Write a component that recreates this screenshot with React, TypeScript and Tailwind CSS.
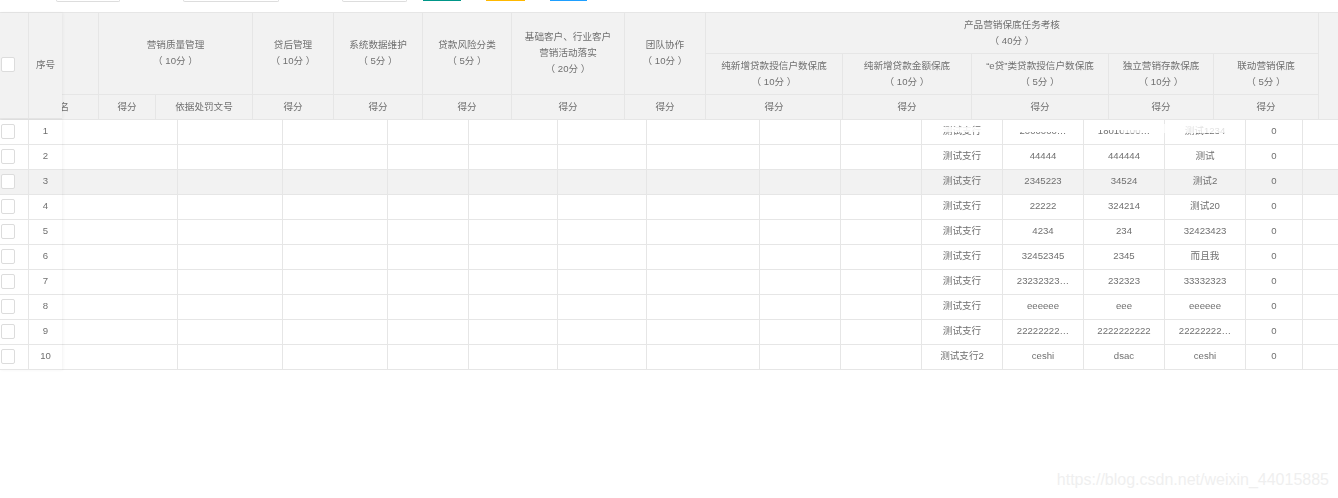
const columnsTemplate =
  "grid-cols-[37px_57px_97px_81px_89px_89px_113px_81px_137px_129px_137px_105px_105px_20px]";

function H({ className = "", lines }: { className?: string; lines: string[] }) {
  return (
    <div className={`flex flex-col items-center justify-center overflow-hidden border-r border-b border-[#e6e6e6] text-center leading-[16px] ${className}`}>
      {lines.map((l) => (
        <span key={l} className="blur-[0.25px]">{l}</span>
      ))}
    </div>
  );
}

const rows = [
  ["测试支行", "2000000…", "18010100…", "测试1234", "0"],
  ["测试支行", "44444", "444444", "测试", "0"],
  ["测试支行", "2345223", "34524", "测试2", "0"],
  ["测试支行", "22222", "324214", "测试20", "0"],
  ["测试支行", "4234", "234", "32423423", "0"],
  ["测试支行", "32452345", "2345", "而且我", "0"],
  ["测试支行", "23232323…", "232323", "33332323", "0"],
  ["测试支行", "eeeeee", "eee", "eeeeee", "0"],
  ["测试支行", "22222222…", "2222222222", "22222222…", "0"],
  ["测试支行2", "ceshi", "dsac", "ceshi", "0"],
];

const emptyWidths = ["w-[116px]", "w-[105px]", "w-[105px]", "w-[81px]", "w-[89px]", "w-[89px]", "w-[113px]", "w-[81px]", "w-[81px]"];
const dataWidths = ["w-[81px]", "w-[81px]", "w-[81px]", "w-[81px]", "w-[57px]"];

function Box() {
  return <span className="block h-[15px] w-[14px] rounded-[2px] border border-[#dcdcdc] bg-white" />;
}

export default function App() {
  return (
    <div
      className="h-[498px] w-[1338px] overflow-hidden bg-white text-[9.6px] text-[#707070]"
      style={{ fontFamily: '"Liberation Sans", "Noto Sans CJK SC", sans-serif' }}
    >
      {/* toolbar, cut off at the top of the window */}
      <div className="flex h-[12px] items-start pl-[56px]">
        <div className="h-[2px] w-[64px] rounded-b-[2px] border-x border-b border-[#dddddd]" />
        <div className="ml-[63px] h-[2px] w-[96px] rounded-b-[2px] border-x border-b border-[#dddddd]" />
        <div className="ml-[63px] h-[2px] w-[65px] rounded-b-[2px] border-x border-b border-[#dddddd]" />
        <div className="ml-[16px] h-[1px] w-[38px] bg-[#009688]" />
        <div className="ml-[25px] h-[1px] w-[39px] bg-[#ffb800]" />
        <div className="ml-[25px] h-[1px] w-[37px] bg-[#1e9fff]" />
      </div>

      {/* header */}
      <div className="flex h-[108px] border-y border-[#e6e6e6] bg-[#f2f2f2]">
        <div className="z-10 flex w-[62px] shrink-0 bg-[#f2f2f2] shadow-[1px_0_3px_rgba(0,0,0,0.05)]">
          <div className="flex w-[29px] shrink-0 items-center border-r border-b border-[#e6e6e6] pb-[2px] pl-[1px]">
            <Box />
          </div>
          <div className="flex w-[33px] shrink-0 items-center justify-center border-b border-[#e6e6e6]">
            <span className="blur-[0.25px]">序号</span>
          </div>
        </div>
        <div className={`grid flex-1 grid-rows-[41px_41px_25px] ${columnsTemplate}`}>
          <H className="row-span-2" lines={[""]} />
          <H className="col-span-2 row-span-2 pb-[2px]" lines={["营销质量管理", "（ 10分 ）"]} />
          <H className="row-span-2 pb-[2px]" lines={["贷后管理", "（ 10分 ）"]} />
          <H className="row-span-2 pb-[2px]" lines={["系统数据维护", "（ 5分 ）"]} />
          <H className="row-span-2 pb-[2px]" lines={["贷款风险分类", "（ 5分 ）"]} />
          <H className="row-span-2 pb-[2px]" lines={["基础客户、行业客户", "营销活动落实", "（ 20分 ）"]} />
          <H className="row-span-2 pb-[2px]" lines={["团队协作", "（ 10分 ）"]} />
          <H className="col-span-5" lines={["产品营销保底任务考核", "（ 40分 ）"]} />
          <div className="row-span-3 border-b border-[#e6e6e6]" />
          <H lines={["纯新增贷款授信户数保底", "（ 10分 ）"]} />
          <H lines={["纯新增贷款金额保底", "（ 10分 ）"]} />
          <H lines={["“e贷”类贷款授信户数保底", "（ 5分 ）"]} />
          <H lines={["独立营销存款保底", "（ 10分 ）"]} />
          <H lines={["联动营销保底", "（ 5分 ）"]} />
          <H className="items-end pr-[29px]" lines={["名"]} />
          {["得分", "依据处罚文号", "得分", "得分", "得分", "得分", "得分", "得分", "得分", "得分", "得分", "得分"].map((t, i) => (
            <H key={i} lines={[t]} />
          ))}
        </div>
      </div>

      {/* body */}
      <div className="flex">
        <div className="z-10 w-[62px] shrink-0 bg-white shadow-[1px_0_3px_rgba(0,0,0,0.05)]">
          {rows.map((_, i) => (
            <div key={i} className={`flex h-[25px] border-b border-[#e6e6e6] ${i === 2 ? "bg-[#f2f2f2]" : ""}`}>
              <div className="flex w-[29px] shrink-0 items-center border-r border-[#e6e6e6] pb-[2px] pl-[1px]">
                <Box />
              </div>
              <div className="flex flex-1 items-center justify-center pb-[2px]">
                <span className="blur-[0.25px]">{i + 1}</span>
              </div>
            </div>
          ))}
        </div>
        <div className="flex-1">
          {rows.map((r, i) => (
            <div key={i} className={`relative flex h-[25px] border-b border-[#e6e6e6] ${i === 2 ? "bg-[#f2f2f2]" : ""}`}>
              {emptyWidths.map((w, j) => (
                <div key={j} className={`shrink-0 border-r border-[#e6e6e6] ${w}`} />
              ))}
              {r.map((c, j) => (
                <div key={j} className={`flex shrink-0 items-center justify-center border-r border-[#e6e6e6] pb-[1px] ${dataWidths[j]}`}>
                  <span className="blur-[0.25px]">{c}</span>
                </div>
              ))}
              {i === 0 && (
                <>
                  {/* erased patches of the screenshot over the first row */}
                  <div className="absolute top-[7px] left-[870px] h-[5px] w-[70px] bg-white/90" />
                  <div className="absolute top-0 left-[950px] h-[12px] w-[70px] bg-white" />
                  <div className="absolute top-0 left-[1025px] h-[10px] w-[77px] bg-white" />
                  <div className="absolute top-[4px] left-[1060px] h-[9px] w-[50px] bg-white/70" />
                  <div className="absolute top-0 left-[1110px] h-[13px] w-[66px] bg-white/80" />
                </>
              )}
            </div>
          ))}
        </div>
      </div>

      {/* watermark */}
      <div className="mt-[101px] pr-[9px] text-right text-[16px] leading-[18px] text-[#efefef]">
        https://blog.csdn.net/weixin_44015885
      </div>
    </div>
  );
}
